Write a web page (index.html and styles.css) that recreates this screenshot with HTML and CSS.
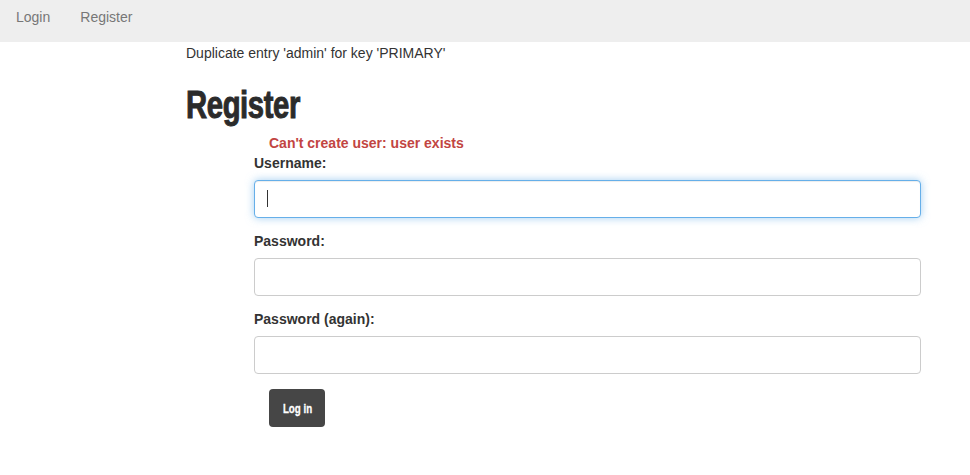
FILE: index.html
```html
<!DOCTYPE html>
<html>
<head>
<meta charset="utf-8">
<link rel="stylesheet" href="styles.css">
</head>
<body>
<nav class="navbar">
  <a class="nav-link" href="#">Login</a>
  <a class="nav-link" href="#">Register</a>
</nav>
<main class="content">
  <p class="db-error">Duplicate entry 'admin' for key 'PRIMARY'</p>
  <h1 class="title"><span class="condensed">Register</span></h1>
  <form class="form">
    <div class="form-error">Can't create user: user exists</div>
    <label class="label" for="u">Username:</label>
    <div class="field caret"><input class="input focused" id="u" type="text"></div>
    <label class="label" for="p">Password:</label>
    <div class="field"><input class="input" id="p" type="password"></div>
    <label class="label" for="p2">Password (again):</label>
    <div class="field"><input class="input" id="p2" type="password"></div>
    <button class="btn" type="button"><span class="btn-text">Log in</span></button>
  </form>
</main>
</body>
</html>
```

FILE: styles.css
```css
* { box-sizing: border-box; }
body {
  margin: 0;
  font-family: "Liberation Sans", Arial, sans-serif;
  font-size: 14px;
  line-height: 20px;
  color: #333;
  background: #fff;
}
.navbar {
  height: 42px;
  background: #eeeeee;
  display: flex;
  align-items: flex-start;
  padding: 7px 0 0 16px;
  gap: 30px;
}
.nav-link {
  color: #777;
  text-decoration: none;
  font-size: 14px;
  line-height: 20px;
}
.content {
  padding-left: 186px;
  padding-right: 49px;
}
.db-error {
  margin: 0;
  padding-top: 1px;
  line-height: 20px;
}
.title {
  margin: 22px 0 0 0;
  font-family: "Liberation Sans", sans-serif;
  font-weight: bold;
  font-size: 38px;
  line-height: 40px;
  color: #2b2b2b;
  height: 40px;
}
.condensed {
  display: inline-block;
  transform: scaleX(0.77);
  transform-origin: left center;
  -webkit-text-stroke: 1px #2b2b2b;
  letter-spacing: -0.5px;
}
.form {
  display: flex;
  flex-direction: column;
  align-items: stretch;
  padding-left: 68px;
  margin-top: 8px;
}
.form-error {
  color: #c24542;
  font-weight: bold;
  padding-left: 15px;
  line-height: 20px;
}
.label {
  font-weight: bold;
  line-height: 20px;
  margin-bottom: 7px;
}
.field {
  position: relative;
  margin-bottom: 13px;
}
.input {
  display: block;
  width: 100%;
  height: 38px;
  border: 1px solid #ccc;
  border-radius: 4px;
  font-size: 14px;
  padding: 6px 12px;
  outline: none;
  background: #fff;
}
.focused {
  border-color: #66afe9;
  box-shadow: inset 0 1px 1px rgba(0,0,0,.075), 0 0 8px rgba(102,175,233,.6);
}
.caret::after {
  content: "";
  position: absolute;
  left: 13px;
  top: 10px;
  width: 1px;
  height: 17px;
  background: #333;
}
.btn {
  align-self: flex-start;
  margin-left: 15px;
  margin-top: 2px;
  width: 56px;
  height: 38px;
  background: #464646;
  color: #fff;
  border: none;
  border-radius: 4px;
  font-family: "Liberation Sans", sans-serif;
  font-weight: bold;
  font-size: 13px;
  padding: 0;
  display: flex;
  align-items: center;
  justify-content: center;
}
.btn-text {
  display: inline-block;
  transform: scaleX(0.75);
  -webkit-text-stroke: 0.3px #fff;
}
```
